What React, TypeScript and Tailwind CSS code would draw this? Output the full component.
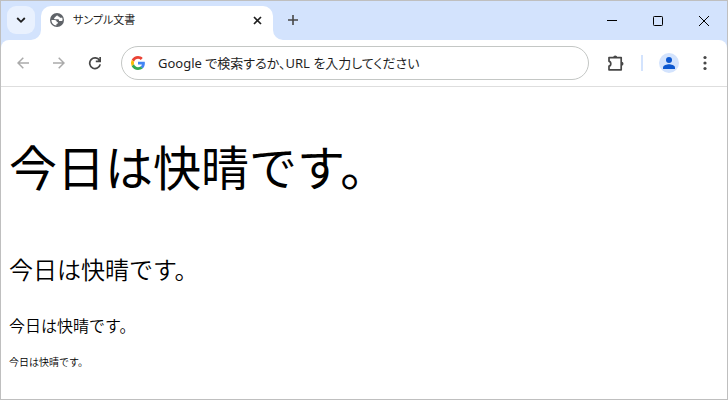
const pageText = "今日は快晴です。"

const TabStrip = () => {
  return (
    <header className="flex h-[39px] items-start bg-[#d3e3fd] pl-1.5">
      <button type="button" aria-label="タブを検索" className="mt-[5px] flex size-7 items-center justify-center rounded-[9px] bg-[#e9f1fe]">
        <svg width="10" height="8" viewBox="0 0 10 8" fill="none" stroke="#1f1f1f" strokeWidth="1.8">
          <path d="M1.2 2 5 5.8 8.8 2" />
        </svg>
      </button>

      <div className="relative mt-[5px] ml-1.5 flex h-[34px] w-[232px] items-center rounded-t-[10px] bg-white pr-2.5 pb-1.5 pl-2">
        <svg className="absolute bottom-0 -left-2.5" width="10" height="10" viewBox="0 0 10 10" fill="#fff">
          <path d="M10 0v10H0A10 10 0 0 0 10 0Z" />
        </svg>
        <svg className="absolute -right-2.5 bottom-0" width="10" height="10" viewBox="0 0 10 10" fill="#fff">
          <path d="M0 0v10h10A10 10 0 0 1 0 0Z" />
        </svg>

        <svg width="16" height="16" viewBox="0 0 16 16">
          <circle cx="8" cy="8" r="7" fill="#5f6368" />
          <path d="M9 2.6 6.5 4.7 5 6.3c.1.8.6 1 1.6 1h2.2c1 0 1.3.7 1.2 1.6h2.3c.8 0 1.2-.4 1.3-1a5.6 5.6 0 0 0-.5-2.300c-1 .5-2.200.3-2.700-.6-.4-.8-1.200-.5-1.900-1-.3-.4 0-1.100.5-1.400Z" fill="#fff" />
          <path d="M2.4 8h3.100c1.500 0 2.300.8 2.300 2.200h1.300c0 1.100-.6 1.700-1.700 1.700v1.600A5.600 5.600 0 0 1 2.400 8Z" fill="#fff" />
        </svg>
        <span className="ml-2 flex-1 text-[11px] leading-4 text-[#1f1f1f]">サンプル文書</span>
        <button type="button" aria-label="タブを閉じる" className="flex size-3 items-center justify-center">
          <svg width="9" height="9" viewBox="0 0 9 9" stroke="#1f1f1f" strokeWidth="1.7">
            <path d="m1 1 7 7M8 1 1 8" />
          </svg>
        </button>
      </div>

      <button type="button" aria-label="新しいタブ" className="mt-[5px] ml-1.5 flex size-7 items-center justify-center">
        <svg width="12" height="12" viewBox="0 0 12 12" stroke="#474747" strokeWidth="1.6">
          <path d="M6 1v10M1 6h10" />
        </svg>
      </button>

      <div className="ml-auto flex h-full">
        <button type="button" aria-label="最小化" className="flex w-[46px] items-center justify-center">
          <svg width="10" height="10" viewBox="0 0 10 10" stroke="#000">
            <path d="M0 4.5h10" />
          </svg>
        </button>
        <button type="button" aria-label="最大化" className="flex w-[46px] items-center justify-center">
          <svg width="10" height="10" viewBox="0 0 10 10" fill="none" stroke="#000">
            <rect x=".5" y=".5" width="9" height="9" rx=".8" />
          </svg>
        </button>
        <button type="button" aria-label="閉じる" className="flex w-[46px] items-center justify-center">
          <svg width="10" height="10" viewBox="0 0 10 10" stroke="#000">
            <path d="m0 0 10 10M10 0 0 10" />
          </svg>
        </button>
      </div>
    </header>
  )
}

const Toolbar = () => {
  return (
    <div className="bg-[#d3e3fd]">
      <div className="flex items-center rounded-t-lg border-b border-[#dedede] bg-white px-2 pt-1.5 pb-1.5">
        <div className="flex gap-2">
          <button type="button" aria-label="戻る" className="flex size-7 items-center justify-center">
            <svg width="12" height="12" viewBox="0 0 12 12" fill="none" stroke="#aaa" strokeWidth="1.5">
              <path d="M12 6H1M6.3 .7 1 6l5.300 5.300" />
            </svg>
          </button>
          <button type="button" aria-label="進む" className="flex size-7 items-center justify-center">
            <svg width="12" height="12" viewBox="0 0 12 12" fill="none" stroke="#aaa" strokeWidth="1.5">
              <path d="M0 6h11M5.7 .7 11 6l-5.300 5.300" />
            </svg>
          </button>
          <button type="button" aria-label="再読み込み" className="flex size-7 items-center justify-center">
            <svg width="14" height="14" viewBox="0 0 14 14" fill="none" stroke="#474747" strokeWidth="1.7">
              <path d="M11.5 4.4A5.3 5.3 0 1 0 12.2 8.300" />
              <path d="M13 1v5.200H7.800v-1.700h2.300L11.300 3.200V1Z" fill="#474747" stroke="none" />
            </svg>
          </button>
        </div>

        <label className="ml-3 flex h-[34px] flex-1 items-center rounded-full border border-[#c4c7c5] bg-white pl-2">
          <svg width="16" height="16" viewBox="0 0 48 48">
            <path fill="#ea4335" d="M24 11.5c3.200 0 6 1.100 8.200 3.200l6-6C34.500 5.200 29.700 3 24 3 15.800 3 8.700 7.700 5.200 14.600l7 5.400C13.900 15 18.500 11.500 24 11.500Z" />
            <path fill="#4285f4" d="M44.6 24.500c0-1.500-.1-2.700-.4-4.100H24v8h11.800c-.5 2.900-2.100 5.200-4.600 6.800l6.800 5.300c4.200-3.900 6.600-9.500 6.600-16Z" />
            <path fill="#fbbc05" d="M12.2 28a13 13 0 0 1 0-8l-7-5.400a21 21 0 0 0 0 18.800l7-5.400Z" />
            <path fill="#34a853" d="M24 45c5.700 0 10.400-1.900 14-5.100l-6.800-5.300c-1.900 1.300-4.300 2.100-7.200 2.100-5.500 0-10.100-3.700-11.800-8.700l-7 5.400C8.700 40.300 15.800 45 24 45Z" />
          </svg>
          <input
            type="text"
            aria-label="アドレスバー"
            placeholder="Google で検索するか、URL を入力してください"
            className="ml-3 h-7 min-w-0 flex-1 text-[13px] text-[#1f1f1f] outline-none placeholder:text-[#1f1f1f]"
          />
        </label>

        <button type="button" aria-label="拡張機能" className="ml-[13px] flex size-7 items-center justify-center">
          <svg width="18" height="18" viewBox="0 0 18 18" fill="none" stroke="#474747" strokeWidth="1.7">
            <path d="M2 3.600h12.200v12.200H2v-3.700c2.400-.3 2.400-4.500 0-4.800Z" strokeLinejoin="round" />
            <path d="M6.200 3.500a2 2 0 0 1 4 0ZM14.500 7.800a2 2 0 0 1 0 4Z" fill="#474747" stroke="none" />
          </svg>
        </button>
        <span className="ml-[11px] h-4 w-0.5 bg-[#d3e3fd]" />
        <button type="button" aria-label="プロフィール" className="ml-3 flex size-7 items-center justify-center">
          <svg width="20" height="20" viewBox="0 0 20 20">
            <circle cx="10" cy="10" r="10" fill="#d3e3fd" />
            <circle cx="10" cy="7" r="3" fill="#0b57d0" />
            <path d="M4 16v-1.500C4 12.300 8 11.200 10 11.200s6 1.100 6 3.300V16Z" fill="#0b57d0" />
          </svg>
        </button>
        <button type="button" aria-label="メニュー" className="ml-2 flex size-7 items-center justify-center">
          <svg width="4" height="16" viewBox="0 0 4 16" fill="#474747">
            <circle cx="2" cy="2.500" r="1.600" />
            <circle cx="2" cy="8" r="1.600" />
            <circle cx="2" cy="13.500" r="1.600" />
          </svg>
        </button>
      </div>
    </div>
  )
}

const App = () => {
  return (
    <div className="flex min-h-screen flex-col border border-[#bfbfbf] bg-white font-['Noto_Sans','Noto_Sans_CJK_JP',sans-serif]">
      <div className="[font-feature-settings:'palt']">
        <TabStrip />
        <Toolbar />
      </div>
      <main className="flex flex-1 flex-col px-2 pt-11 pb-6 font-['Noto_Sans_CJK_JP',sans-serif] font-[350] text-black">
        <p className="text-[48px] leading-[68px] font-normal">{pageText}</p>
        <p className="mt-[52px] text-[24px] leading-9">{pageText}</p>
        <p className="mt-[26px] text-[16px] leading-6">{pageText}</p>
        <p className="mt-[17px] text-[10px] leading-4">{pageText}</p>
      </main>
    </div>
  )
}

export default App
